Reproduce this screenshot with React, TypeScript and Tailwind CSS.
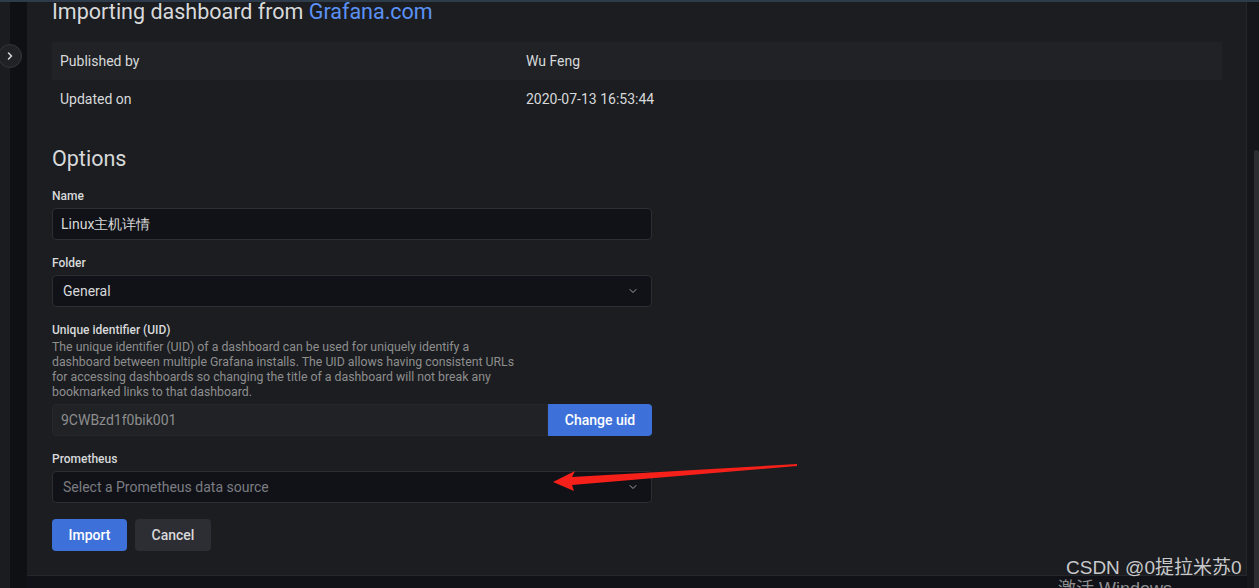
import { ChevronDown, ChevronRight } from "lucide-react";

const rows = [
  ["Published by", "Wu Feng"],
  ["Updated on", "2020-07-13 16:53:44"],
];

function Label({ children }: { children: React.ReactNode }) {
  return <div className="text-xs font-medium text-[#d8d9da] leading-[14px] mb-[5px]">{children}</div>;
}

function SelectBox({ value, muted }: { value: string; muted?: boolean }) {
  return (
    <div className="flex items-center justify-between h-[32px] w-[600px] bg-[#111217] border border-[#2c2e33] rounded-sm pl-[10px] pr-[12px]">
      <span className={muted ? "text-sm text-[#7b7d82]" : "text-sm text-[#d8d9da]"}>{value}</span>
      <ChevronDown size={12} strokeWidth={2} className="text-[#9fa1a6]" />
    </div>
  );
}

export default function App() {
  return (
    <div className="relative h-[588px] w-[1259px] overflow-hidden bg-[#111217] font-['Roboto',sans-serif] text-[#d8d9da]">
      <div className="h-[2px] bg-[#2d3b4a]" />
      <div className="flex h-[586px]">
        {/* left rail */}
        <div className="w-[27px] flex shrink-0">
          <div className="w-[10px] bg-[#1a1c20]" />
          <div className="flex-1 bg-[#0f1013]" />
        </div>

        <div className="flex flex-col w-[1220px]">
          <div className="h-[574px] bg-[#1b1d21] border-r border-b border-[#25272b] pl-[25px] pr-[25px]">
            <h1 className="text-[21.5px] leading-[20px] text-[#d8d9da]">
              Importing dashboard from <span className="text-[#5b91f5]">Grafana.com</span>
            </h1>

            <div className="mt-[20px] w-[1170px] text-sm">
              {rows.map(([k, v], i) => (
                <div key={k} className={`flex items-center h-[38px] ${i === 0 ? "bg-[#202226]" : ""}`}>
                  <div className="w-[474px] pl-[8px]">{k}</div>
                  <div>{v}</div>
                </div>
              ))}
            </div>

            <h2 className="text-[21.5px] leading-[24px] mt-[29px] text-[#d8d9da]">Options</h2>

            <div className="mt-[18px]">
              <Label>Name</Label>
              <div className="flex items-center h-[32px] w-[600px] bg-[#111217] border border-[#2c2e33] rounded-sm px-[8px] text-sm">
                Linux主机详情
              </div>
            </div>

            <div className="mt-[16px]">
              <Label>Folder</Label>
              <SelectBox value="General" />
            </div>

            <div className="mt-[16px]">
              <div className="text-xs font-medium leading-[14px]">Unique identifier (UID)</div>
              <p className="text-[12.3px] text-[#8e8e8e] leading-[15px] w-[468px] mt-[3px]">
                The unique identifier (UID) of a dashboard can be used for uniquely identify a dashboard between
                multiple Grafana installs. The UID allows having consistent URLs for accessing dashboards so changing
                the title of a dashboard will not break any bookmarked links to that dashboard.
              </p>
              <div className="flex mt-[4px] w-[600px] h-[32px]">
                <div className="flex-1 flex items-center bg-[#202226] border border-[#25272b] rounded-l-sm px-[8px] text-sm text-[#8e8e8e]">
                  9CWBzd1f0bik001
                </div>
                <button className="w-[104px] bg-[#3d71d9] text-white text-sm font-medium rounded-r-sm">Change uid</button>
              </div>
            </div>

            <div className="mt-[16px]">
              <Label>Prometheus</Label>
              <SelectBox value="Select a Prometheus data source" muted />
            </div>

            <div className="flex gap-[8px] mt-[16px]">
              <button className="h-[32px] w-[75px] bg-[#3d71d9] text-white text-sm font-medium rounded-sm">Import</button>
              <button className="h-[32px] w-[76px] bg-[#2c2e33] text-[#d8d9da] text-sm font-medium rounded-sm">Cancel</button>
            </div>
          </div>
        </div>

        <div className="flex-1 bg-[#141619] relative">
          <div className="absolute left-[7px] top-[148px] w-[5px] h-[440px] rounded-t bg-[#2c2e33]" />
        </div>
      </div>

      {/* sidebar toggle */}
      <div className="absolute -left-[2px] top-[44px] w-[24px] h-[24px] rounded-full bg-[#202226] border border-[#34363b] flex items-center justify-center">
        <ChevronRight size={12} strokeWidth={3} className="text-[#d8d9da]" />
      </div>

      {/* annotation arrow */}
      <svg className="absolute left-0 top-0 pointer-events-none" width="1259" height="588">
        <path d="M797 464 L572 477 L575 471 L553 482 L574 491 L572 485 L797 466 Z" fill="#f5201a" />
      </svg>

      {/* watermark */}
      <div className="absolute left-[1066px] top-[557px] text-[19px] leading-[22px] text-[#c8c9cb] font-['Liberation_Sans','Noto_Sans_CJK_SC',sans-serif]">
        CSDN @0提拉米苏0
      </div>
      <div className="absolute left-[1058px] top-[578px] text-[18px] leading-[22px] text-[#8d8e90] font-['Liberation_Sans','Noto_Sans_CJK_SC',sans-serif]">
        激活 Windows
      </div>
    </div>
  );
}
